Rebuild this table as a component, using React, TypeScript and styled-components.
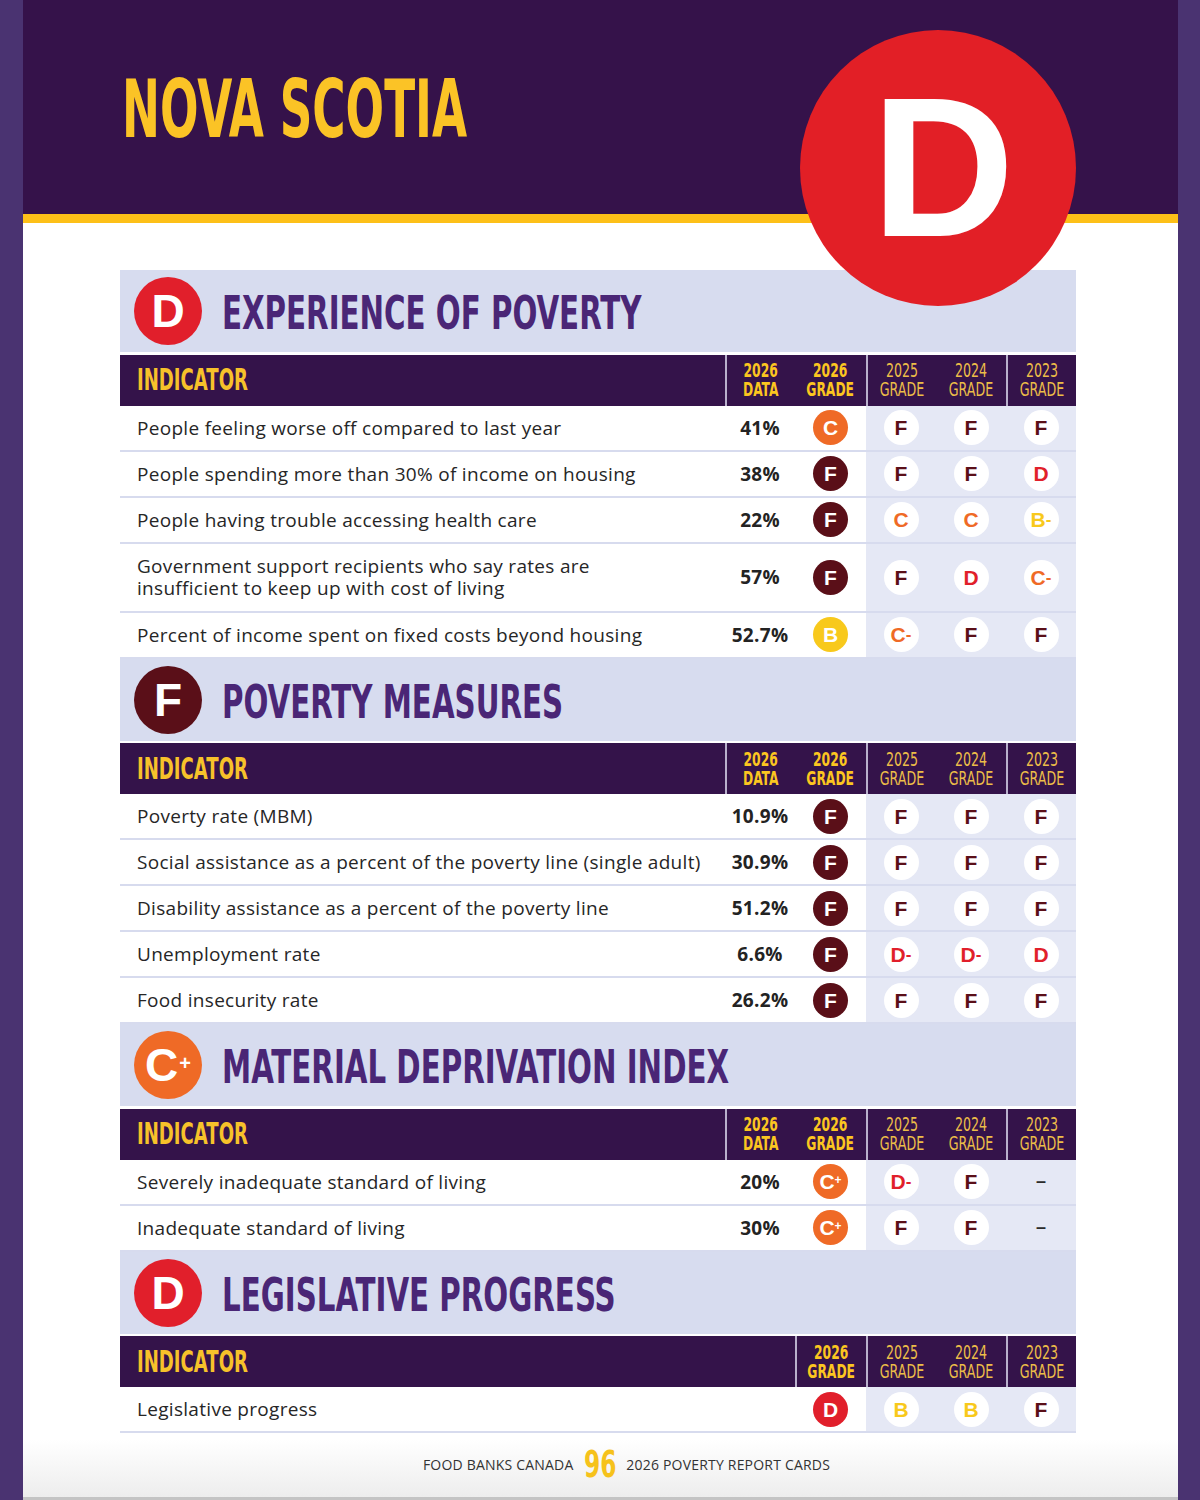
import React from 'react';
import styled, { createGlobalStyle } from 'styled-components';

const COND = `"Liberation Sans Narrow", "DejaVu Sans Condensed", "Liberation Sans", sans-serif`;
const BODY = `"Open Sans", "Liberation Sans", sans-serif`;
const GLYPH = `"Liberation Sans", Arial, sans-serif`;

const GlobalStyle = createGlobalStyle`
  html, body { margin: 0; padding: 0; }
  body {
    background: #4a3371;
    font-family: ${BODY};
    -webkit-font-smoothing: antialiased;
  }
`;

const gradeColor = (g: string) => {
  if (g.startsWith('F')) return '#5a0f18';
  if (g.startsWith('D')) return '#e11f2b';
  if (g.startsWith('C')) return '#ef6a26';
  if (g.startsWith('B')) return '#f8c91c';
  return '#333';
};

const Page = styled.div`
  position: relative;
  width: 1155px;
  height: 1500px;
  margin: 0 22px 0 23px;
  box-sizing: border-box;
  background: linear-gradient(to bottom, #ffffff 0, #ffffff 1440px, #ededed 1497px);
  border-bottom: 3px solid #c4c4c4;
  display: flex;
  flex-direction: column;
  overflow: hidden;
`;

const Header = styled.header`
  height: 223px;
  box-sizing: border-box;
  background: #35124a;
  border-bottom: 9px solid #fdc018;
  padding: 70px 0 0 99px;
  flex: none;
`;

const Title = styled.h1`
  margin: 0;
  display: inline-block;
  font-family: ${COND};
  font-weight: 700;
  font-size: 80px;
  line-height: 1;
  color: #fbc326;
  transform: scaleX(0.63);
  transform-origin: left center;
  white-space: nowrap;
`;

const BigGrade = styled.div`
  position: absolute;
  left: 777px;
  top: 30px;
  width: 276px;
  height: 276px;
  border-radius: 50%;
  background: #e21f26;
  display: flex;
  align-items: center;
  justify-content: center;
  font-family: ${GLYPH};
  font-weight: 700;
  font-size: 198px;
  line-height: 1;
  color: #ffffff;
  padding-left: 10px;
  box-sizing: border-box;
`;

const Content = styled.main`
  padding: 47px 102px 0 97px;
  display: flex;
  flex-direction: column;
`;

const SectionHeader = styled.div`
  height: 82px;
  background: #d7dcef;
  display: flex;
  align-items: center;
  gap: 20px;
  padding-left: 14px;
`;

const SectionIcon = styled.div<{ $color: string }>`
  width: 68px;
  height: 68px;
  border-radius: 50%;
  background: ${(p) => p.$color};
  display: flex;
  align-items: center;
  justify-content: center;
  font-family: ${GLYPH};
  font-weight: 700;
  font-size: 46px;
  line-height: 1;
  color: #fff;
  flex: none;
`;

const IconPlus = styled.span`
  font-size: 20px;
  margin-left: 1px;
  position: relative;
  top: -2px;
`;

const SectionTitle = styled.h2`
  margin: 0;
  display: inline-block;
  font-family: ${COND};
  font-weight: 700;
  font-size: 46px;
  line-height: 1;
  color: #4a2676;
  transform: scaleX(0.708);
  transform-origin: left center;
  white-space: nowrap;
  position: relative;
  top: 2px;
`;

const COLS = '605px 70px 71px 70px 70px 70px';

const TableHead = styled.div`
  margin-top: 2.5px;
  height: 51px;
  background: #34134a;
  display: grid;
  grid-template-columns: ${COLS};
`;

const HeadIndicator = styled.div<{ $span: number }>`
  grid-column: span ${(p) => p.$span};
  display: flex;
  align-items: center;
  padding-left: 17px;
`;

const IndicatorLabel = styled.span`
  display: inline-block;
  font-family: ${COND};
  font-weight: 700;
  font-size: 30px;
  line-height: 1;
  color: #f7c22a;
  transform: scaleX(0.67);
  transform-origin: left center;
`;

const HeadCell = styled.div<{ $divider?: boolean }>`
  display: flex;
  align-items: center;
  justify-content: center;
  border-left: ${(p) => (p.$divider ? '2px solid #b9b0cc' : '0')};
`;

const HeadLabel = styled.span<{ $strong?: boolean }>`
  display: inline-block;
  font-family: ${COND};
  font-weight: ${(p) => (p.$strong ? 700 : 400)};
  font-size: 19px;
  line-height: 19px;
  text-align: center;
  color: ${(p) => (p.$strong ? '#fcc620' : '#ecbd48')};
  transform: scaleX(${(p) => (p.$strong ? 0.72 : 0.74)});
`;

const Row = styled.div<{ $tall?: boolean }>`
  display: grid;
  grid-template-columns: ${COLS};
  min-height: ${(p) => (p.$tall ? '67px' : '44px')};
  border-bottom: 2px solid #d7dbee;
`;

const LabelCell = styled.div<{ $span: number }>`
  grid-column: span ${(p) => p.$span};
  display: flex;
  align-items: center;
  padding-left: 17px;
  font-family: ${BODY};
  font-weight: 500;
  font-size: 19px;
  letter-spacing: 0.3px;
  line-height: 22px;
  color: #262626;
  white-space: pre-line;
`;

const DataCell = styled.div`
  display: flex;
  align-items: center;
  justify-content: center;
  font-family: ${BODY};
  font-weight: 700;
  font-size: 19px;
  letter-spacing: 0.3px;
  color: #232323;
`;

const GradeCell = styled.div<{ $history?: boolean }>`
  display: flex;
  align-items: center;
  justify-content: center;
  background: ${(p) => (p.$history ? '#e5e8f5' : 'transparent')};
`;

const Badge = styled.div<{ $color: string; $filled?: boolean }>`
  width: 35px;
  height: 35px;
  border-radius: 50%;
  background: ${(p) => (p.$filled ? p.$color : '#ffffff')};
  color: ${(p) => (p.$filled ? '#ffffff' : p.$color)};
  display: flex;
  align-items: center;
  justify-content: center;
  font-family: ${GLYPH};
  font-weight: 700;
  font-size: 21px;
  line-height: 1;
`;

const Mod = styled.span<{ $plus?: boolean }>`
  font-size: ${(p) => (p.$plus ? '12px' : '17px')};
  position: relative;
  top: ${(p) => (p.$plus ? '-2px' : '0')};
`;

const Dash = styled.span`
  font-family: ${GLYPH};
  font-weight: 700;
  font-size: 18px;
  color: #2b2b2b;
`;

const Footer = styled.footer`
  margin-top: 13px;
  display: flex;
  align-items: center;
  justify-content: center;
  gap: 10px;
  padding-left: 52px;
  font-family: ${BODY};
  font-weight: 500;
  font-size: 14px;
  letter-spacing: 0.2px;
  color: #333;
`;

const PageNum = styled.span`
  display: inline-block;
  margin: 0 -7px;
  font-family: ${COND};
  font-weight: 700;
  font-size: 37px;
  line-height: 1;
  color: #f6c21b;
  transform: scaleX(0.7);
`;

const GradeMark = ({ g }: { g: string }) => {
  const base = g[0];
  const mod = g.slice(1);
  return (
    <>
      {base}
      {mod && <Mod $plus={mod === '+'}>{mod === '-' ? '-' : '+'}</Mod>}
    </>
  );
};

const GradeBadge = ({ g, filled }: { g: string; filled?: boolean }) => {
  if (g === '–') return <Dash>–</Dash>;
  return (
    <Badge $color={gradeColor(g)} $filled={filled}>
      <GradeMark g={g} />
    </Badge>
  );
};

type RowData = { label: string; data?: string; grades: string[]; tall?: boolean };
type SectionData = { grade: string; title: string; hasData: boolean; rows: RowData[] };

const sections: SectionData[] = [
  {
    grade: 'D',
    title: 'EXPERIENCE OF POVERTY',
    hasData: true,
    rows: [
      { label: 'People feeling worse off compared to last year', data: '41%', grades: ['C', 'F', 'F', 'F'] },
      { label: 'People spending more than 30% of income on housing', data: '38%', grades: ['F', 'F', 'F', 'D'] },
      { label: 'People having trouble accessing health care', data: '22%', grades: ['F', 'C', 'C', 'B-'] },
      {
        label: 'Government support recipients who say rates are\ninsufficient to keep up with cost of living',
        data: '57%',
        grades: ['F', 'F', 'D', 'C-'],
        tall: true,
      },
      { label: 'Percent of income spent on fixed costs beyond housing', data: '52.7%', grades: ['B', 'C-', 'F', 'F'] },
    ],
  },
  {
    grade: 'F',
    title: 'POVERTY MEASURES',
    hasData: true,
    rows: [
      { label: 'Poverty rate (MBM)', data: '10.9%', grades: ['F', 'F', 'F', 'F'] },
      { label: 'Social assistance as a percent of the poverty line (single adult)', data: '30.9%', grades: ['F', 'F', 'F', 'F'] },
      { label: 'Disability assistance as a percent of the poverty line', data: '51.2%', grades: ['F', 'F', 'F', 'F'] },
      { label: 'Unemployment rate', data: '6.6%', grades: ['F', 'D-', 'D-', 'D'] },
      { label: 'Food insecurity rate', data: '26.2%', grades: ['F', 'F', 'F', 'F'] },
    ],
  },
  {
    grade: 'C+',
    title: 'MATERIAL DEPRIVATION INDEX',
    hasData: true,
    rows: [
      { label: 'Severely inadequate standard of living', data: '20%', grades: ['C+', 'D-', 'F', '–'] },
      { label: 'Inadequate standard of living', data: '30%', grades: ['C+', 'F', 'F', '–'] },
    ],
  },
  {
    grade: 'D',
    title: 'LEGISLATIVE PROGRESS',
    hasData: false,
    rows: [{ label: 'Legislative progress', grades: ['D', 'B', 'B', 'F'] }],
  },
];

const Section = ({ s }: { s: SectionData }) => (
  <section>
    <SectionHeader>
      <SectionIcon $color={gradeColor(s.grade)}>
        {s.grade[0]}
        {s.grade.length > 1 && <IconPlus>{s.grade[1]}</IconPlus>}
      </SectionIcon>
      <SectionTitle>{s.title}</SectionTitle>
    </SectionHeader>
    <TableHead>
      <HeadIndicator $span={s.hasData ? 1 : 2}>
        <IndicatorLabel>INDICATOR</IndicatorLabel>
      </HeadIndicator>
      {s.hasData && (
        <HeadCell $divider>
          <HeadLabel $strong>2026<br />DATA</HeadLabel>
        </HeadCell>
      )}
      <HeadCell $divider={!s.hasData}>
        <HeadLabel $strong>2026<br />GRADE</HeadLabel>
      </HeadCell>
      <HeadCell $divider>
        <HeadLabel>2025<br />GRADE</HeadLabel>
      </HeadCell>
      <HeadCell>
        <HeadLabel>2024<br />GRADE</HeadLabel>
      </HeadCell>
      <HeadCell $divider>
        <HeadLabel>2023<br />GRADE</HeadLabel>
      </HeadCell>
    </TableHead>
    {s.rows.map((r) => (
      <Row key={r.label} $tall={r.tall}>
        <LabelCell $span={s.hasData ? 1 : 2}>{r.label}</LabelCell>
        {s.hasData && <DataCell>{r.data}</DataCell>}
        <GradeCell>
          <GradeBadge g={r.grades[0]} filled />
        </GradeCell>
        {r.grades.slice(1).map((g, i) => (
          <GradeCell key={i} $history>
            <GradeBadge g={g} />
          </GradeCell>
        ))}
      </Row>
    ))}
  </section>
);

export default function App() {
  return (
    <>
      <GlobalStyle />
      <Page>
        <Header>
          <Title>NOVA SCOTIA</Title>
        </Header>
        <BigGrade>D</BigGrade>
        <Content>
          {sections.map((s) => (
            <Section key={s.title} s={s} />
          ))}
        </Content>
        <Footer>
          <span>FOOD BANKS CANADA</span>
          <PageNum>96</PageNum>
          <span>2026 POVERTY REPORT CARDS</span>
        </Footer>
      </Page>
    </>
  );
}
